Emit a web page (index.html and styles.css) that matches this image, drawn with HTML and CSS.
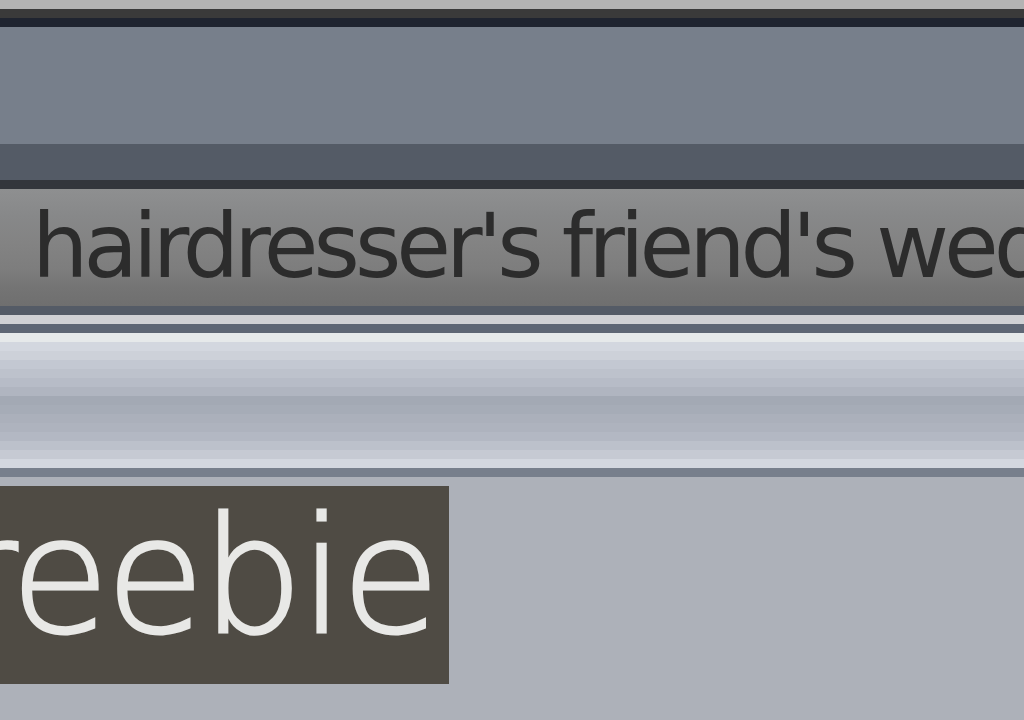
FILE: index.html
```html
<!DOCTYPE html>
<html>
<head>
<meta charset="utf-8">
<link rel="stylesheet" href="styles.css">
</head>
<body>
<div class="page">
  <div class="bar top-edge"></div>
  <div class="bar rule-dark"></div>
  <div class="bar rule-navy"></div>
  <div class="header"></div>
  <div class="subheader"></div>
  <div class="bar rule-char"></div>
  <div class="titlebar"><span class="title">hairdresser's friend's wedding</span></div>
  <div class="bar rule-slate"></div>
  <div class="bar rule-light"></div>
  <div class="bar rule-slate2"></div>
  <div class="bar rule-white"></div>
  <div class="band"></div>
  <div class="bar rule-slate3"></div>
  <div class="bar gap"></div>
  <div class="tag"><span class="tag-text">freebie</span></div>
</div>
</body>
</html>
```

FILE: styles.css
```css
html, body {
  margin: 0;
  padding: 0;
}
body {
  background: #adb1b9;
  width: 1024px;
  height: 720px;
  overflow: hidden;
}
.page {
  display: flex;
  flex-direction: column;
}
.bar {
  height: 9px;
  flex: none;
}
.top-edge { background: #b3b3b3; }
.rule-dark { background: #3a3a3a; }
.rule-navy { background: #1f2430; }
.header {
  height: 117px;
  background: #777f8b;
}
.subheader {
  height: 36px;
  background: #545b66;
}
.rule-char { background: #33363c; }
.titlebar {
  height: 117px;
  background: linear-gradient(#8e8f90 0px, #8c8d8e 9px, #878889 27px, #838383 54px, #7d7d7d 81px, #747474 99px, #6f6f6f 117px);
  overflow: hidden;
  white-space: nowrap;
  padding-left: 32px;
}
.title {
  font-family: "DejaVu Sans", sans-serif;
  font-size: 89px;
  line-height: 114px;
  letter-spacing: -5px;
  color: #2c2c2c;
}
.rule-slate { background: #545b66; }
.rule-light { background: #d0d1d4; }
.rule-slate2 { background: #5e6674; }
.rule-white { background: #e6e9ea; }
.band {
  height: 117px;
  background: linear-gradient(
    #d3d7df 0px, #d3d7df 9px,
    #cdd1d9 9px, #cdd1d9 18px,
    #c3c8d2 18px, #c3c8d2 27px,
    #bdc2cc 27px, #bdc2cc 36px,
    #b7bcc7 36px, #b7bcc7 45px,
    #b0b5c0 45px, #b0b5c0 54px,
    #a3a9b4 54px, #a3a9b4 63px,
    #a6acb7 63px, #a6acb7 72px,
    #abb0bb 72px, #abb0bb 81px,
    #aeb3be 81px, #aeb3be 90px,
    #b3b8c3 90px, #b3b8c3 99px,
    #bcc1cb 99px, #bcc1cb 108px,
    #c6cad3 108px, #c6cad3 117px
  );
}
.rule-slate3 {
  background: #d3d7df;
}
.gap { background: #777f8c; }
.tag {
  margin-top: 9px;
  width: 449px;
  height: 198px;
  background: #4f4b44;
  display: flex;
  justify-content: flex-end;
  align-items: flex-start;
  overflow: hidden;
  padding-right: 12px;
  box-sizing: border-box;
}
.tag-text {
  flex: none;
  font-family: "DejaVu Sans", sans-serif;
  font-weight: 300;
  font-size: 160px;
  line-height: 182px;
  letter-spacing: -3px;
  color: #e8e8e6;
  -webkit-text-stroke: 3px #e8e8e6;
  white-space: nowrap;
}
```
